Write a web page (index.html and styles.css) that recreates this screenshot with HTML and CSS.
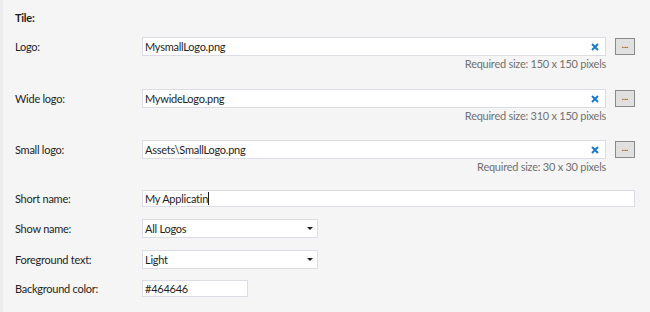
FILE: index.html
```html
<!DOCTYPE html>
<html lang="en">
<head>
    <meta charset="UTF-8">
    <title>Tile settings</title>
    <link rel="stylesheet" href="styles.css">
</head>
<body>
    <div class="panel">
        <div class="section-title">Tile:</div>

        <div class="file-row">
            <div class="line">
                <label class="label">Logo:</label>
                <div class="field file-field">
                    <span class="value">MysmallLogo.png</span>
                    <svg class="clear" width="8" height="8" viewBox="0 0 8 8"><path d="M1 1L7 7M7 1L1 7" stroke="#1c79c9" stroke-width="2"/></svg>
                </div>
                <button class="browse">...</button>
            </div>
            <div class="hint">Required size: 150 x 150 pixels</div>
        </div>

        <div class="file-row wide">
            <div class="line">
                <label class="label">Wide logo:</label>
                <div class="field file-field">
                    <span class="value">MywideLogo.png</span>
                    <svg class="clear" width="8" height="8" viewBox="0 0 8 8"><path d="M1 1L7 7M7 1L1 7" stroke="#1c79c9" stroke-width="2"/></svg>
                </div>
                <button class="browse">...</button>
            </div>
            <div class="hint">Required size: 310 x 150 pixels</div>
        </div>

        <div class="file-row last">
            <div class="line">
                <label class="label">Small logo:</label>
                <div class="field file-field">
                    <span class="value">Assets\SmallLogo.png</span>
                    <svg class="clear" width="8" height="8" viewBox="0 0 8 8"><path d="M1 1L7 7M7 1L1 7" stroke="#1c79c9" stroke-width="2"/></svg>
                </div>
                <button class="browse">...</button>
            </div>
            <div class="hint">Required size: 30 x 30 pixels</div>
        </div>

        <div class="row row-short">
            <label class="label">Short name:</label>
            <div class="field text-field"><span class="value">My Applicatin</span><span class="caret"></span></div>
        </div>

        <div class="row row-show">
            <label class="label">Show name:</label>
            <div class="field select-field">
                <span class="value">All Logos</span>
                <span class="arrow"></span>
            </div>
        </div>

        <div class="row row-fore">
            <label class="label">Foreground text:</label>
            <div class="field select-field">
                <span class="value">Light</span>
                <span class="arrow"></span>
            </div>
        </div>

        <div class="row">
            <label class="label">Background color:</label>
            <div class="field color-field"><span class="value">#464646</span></div>
        </div>
    </div>
</body>
</html>
```

FILE: styles.css
```css
/* Base */
* {
    margin: 0;
    padding: 0;
    box-sizing: border-box;
}

body {
    font-family: 'Lato', 'Noto Sans', sans-serif;
    font-size: 11px;
    letter-spacing: -0.25px;
    color: #1e1e1e;
    background-color: #f5f5f5;
    width: 650px;
    height: 312px;
    overflow: hidden;
}

.panel {
    padding: 11px 15px 0 12px;
    border-left: 3px solid #ececec;
    height: 312px;
}

.section-title {
    font-weight: 700;
    height: 14px;
    line-height: 14px;
    margin-bottom: 12px;
}

/* Rows */
.line,
.row {
    display: flex;
    align-items: center;
}

.file-row {
    height: 52px;
}

.file-row.wide {
    height: 51px;
}

.file-row.last {
    height: 50px;
}

.row {
    margin-bottom: 12px;
}

.row-fore {
    margin-bottom: 11px;
}

.label {
    width: 127px;
    flex-shrink: 0;
}

/* Fields */
.field {
    background-color: #fff;
    border: 1px solid #dcdce6;
    display: flex;
    align-items: center;
    padding: 0 2px;
    white-space: nowrap;
}

.file-field {
    width: 464px;
    height: 19px;
    justify-content: space-between;
}

.file-field .clear {
    margin-right: 4px;
}

.browse {
    width: 20px;
    height: 17px;
    margin-left: 9px;
    background-color: #e0e0e0;
    border: 1px solid #8a8a8a;
    font-family: inherit;
    font-size: 9px;
    line-height: 10px;
    color: #333;
    padding-bottom: 4px;
}

.hint {
    text-align: right;
    width: 591px;
    color: #717171;
    line-height: 14px;
    margin-top: 1px;
}

.text-field {
    width: 493px;
    height: 17px;
}

.caret {
    width: 1px;
    height: 13px;
    background-color: #1e1e1e;
}

.select-field {
    width: 176px;
    height: 19px;
    justify-content: space-between;
}

.arrow {
    width: 0;
    height: 0;
    border-left: 3px solid transparent;
    border-right: 3px solid transparent;
    border-top: 3px solid #1e1e1e;
    margin-right: 2px;
}

.color-field {
    width: 106px;
    height: 17px;
}
```
